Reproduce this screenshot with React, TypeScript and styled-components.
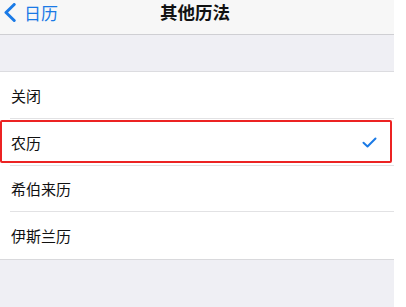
import React from "react";
import styled, { createGlobalStyle } from "styled-components";

const Global = createGlobalStyle`
  html, body { margin: 0; padding: 0; background: #ffffff; }
  body { font-family: "Noto Sans CJK SC", "Noto Sans", sans-serif; }
`;

const Page = styled.div`
  width: 394px;
  height: 307px;
  background: #efeff4;
  display: flex;
  flex-direction: column;
`;

const NavBar = styled.div`
  background: #f7f7f7;
  border-bottom: 1px solid #cfcfd3;
  display: grid;
  grid-template-columns: 1fr auto 1fr;
  align-items: start;
  box-sizing: border-box;
  height: 35px;
`;

const Back = styled.div`
  display: flex;
  align-items: center;
  gap: 8px;
  padding-left: 4px;
  height: 24px;
  color: #1a7ae6;
  font-size: 17px;
`;

const Title = styled.div`
  height: 24px;
  line-height: 24px;
  font-size: 17.5px;
  font-weight: 700;
  color: #111;
  margin-left: -4px;
`;

const Spacer = styled.div`
  height: 36px;
  border-bottom: 1px solid #dcdce0;
`;

const List = styled.div`
  background: #ffffff;
  border-bottom: 1px solid #d9d9dc;
`;

const Row = styled.div<{ $highlight?: boolean; $last?: boolean }>`
  position: relative;
  height: 46.8px;
  display: flex;
  align-items: center;
  padding-left: 11px;
  padding-right: 17px;
  font-size: 15px;
  color: #111;
  box-sizing: border-box;
  &::before {
    content: "";
    display: ${(p) => (p.$last ? "none" : "block")};
    position: absolute;
    left: 10px;
    right: 0;
    bottom: 0;
    height: 1px;
    background: #e2e2e4;
  }
  ${(p) =>
    p.$highlight
      ? `&::after {
    content: "";
    position: absolute;
    left: 0;
    top: 1px;
    width: 392px;
    height: 43px;
    box-sizing: border-box;
    border: 2.5px solid #ec2323;
    border-radius: 2px;
  }`
      : ""}
`;

const Label = styled.span`
  flex: 1;
`;

const items = ["关闭", "农历", "希伯来历", "伊斯兰历"];

export default function App() {
  return (
    <>
      <Global />
      <Page>
        <NavBar>
          <Back>
            <svg width="12" height="19" viewBox="0 0 12 19">
              <path d="M10.2 1.5 L2 9.5 L10.2 17.5" fill="none" stroke="#1a7ae6" strokeWidth="3" strokeLinecap="round" strokeLinejoin="round" />
            </svg>
            <span>日历</span>
          </Back>
          <Title>其他历法</Title>
          <div />
        </NavBar>
        <Spacer />
        <List>
          {items.map((t, i) => (
            <Row key={t} $highlight={i === 1} $last={i === items.length - 1}>
              <Label>{t}</Label>
              {i === 1 && (
                <svg width="15" height="11" viewBox="0 0 15 11">
                  <path d="M1.5 5.8 L5.5 9.5 L13.5 1.5" fill="none" stroke="#1a7ae6" strokeWidth="2" strokeLinecap="round" strokeLinejoin="round" />
                </svg>
              )}
            </Row>
          ))}
        </List>
      </Page>
    </>
  );
}
